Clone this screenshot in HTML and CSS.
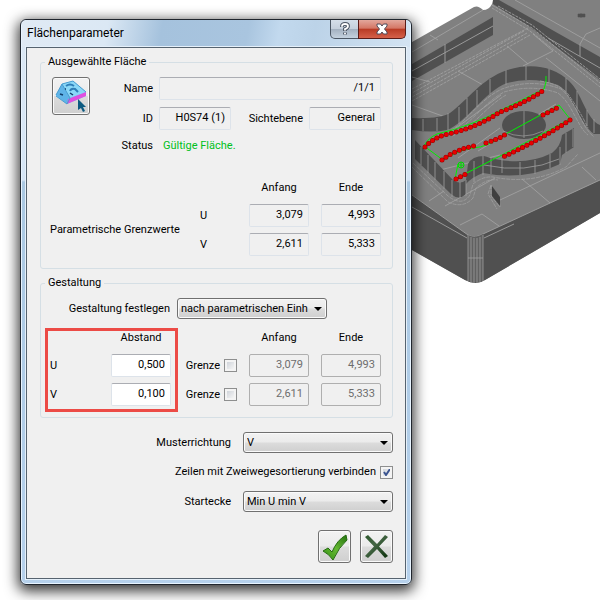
FILE: index.html
```
<!DOCTYPE html>
<html lang="de">
<head>
    <meta charset="UTF-8">
    <meta name="viewport" content="width=device-width, initial-scale=1.0">
    <title>Flächenparameter</title>
    <link rel="stylesheet" href="styles.css">
</head>
<body>
    <main class="workspace">
        <form class="dialog">
            <header class="titlebar">
                <h1>Flächenparameter</h1>
                <div class="window-buttons">
                    <button type="button" class="help" aria-label="Hilfe">
                        <svg width="12" height="14" viewBox="0 0 12 14"><path d="M3 5V4q0-2 3-2t3 2q0 2-3 3v2M6 10.500v2" fill="none" stroke="#4b5563" stroke-width="3.800"/><path d="M3 4.800V4q0-2 3-2t3 2q0 2-3 3v1.600M6 10.800v1.400" fill="none" stroke="#fff" stroke-width="1.800"/></svg>
                    </button>
                    <button type="button" class="close" aria-label="Schließen">
                        <svg width="12" height="12" viewBox="0 0 12 12"><path d="M1 1h3.500L6 3 7.500 1H11v2L8.500 6 11 9v2H7.500L6 9 4.500 11H1V9L3.500 6 1 3z" fill="#fff" stroke="#4f4a58"/></svg>
                    </button>
                </div>
            </header>

            <div class="content">
                <fieldset class="surface">
                    <legend>Ausgewählte Fläche</legend>
                    <div class="surface-info">
                        <button type="button" class="icon-button pick" aria-label="Fläche wählen">
                            <svg width="34" height="34" viewBox="0 0 34 34">
                                <path d="M2 16L8 5 19 2 32 13 32 17 13 25 2 17z" fill="#72c6f2"/>
                                <path d="M8 5L19 2 32 13 16 19z" fill="#8ad8f8"/>
                                <path d="M2 16L8 5 16 19 13 25z" fill="#5fb4e8"/>
                                <path d="M14 20L32 13V17L13 25z" fill="#e04fe0"/>
                                <path d="M2 16L8 5 19 2 32 13M8 5l8 14-3 6L2 17" fill="none" stroke="#4a9dd0"/>
                                <path d="M12 7q4-3 8 0M16 12q1-3 5-2l3 3" fill="none" stroke="#2f7fb8" stroke-width="2"/>
                                <path d="M16 14l3 2M6 15l3 1M11 10h1" stroke="#123e6b" stroke-width="1.500"/>
                                <path d="M24 20v11l3-2 2 4 2-1-2-4h3z" fill="#0c5a80"/>
                            </svg>
                        </button>
                        <div class="surface-grid">
                            <label for="name">Name</label>
                            <input class="wide" id="name" value="/1/1" readonly>
                            <label for="surfaceId">ID</label>
                            <input id="surfaceId" value="H0S74 (1)" readonly>
                            <label for="plane">Sichtebene</label>
                            <input id="plane" value="General" readonly>
                            <span class="caption">Status</span>
                            <output class="status">Gültige Fläche.</output>
                        </div>
                    </div>
                    <div class="range-grid">
                        <span class="head start">Anfang</span>
                        <span class="head">Ende</span>
                        <span class="range-title">Parametrische Grenzwerte</span>
                        <span>U</span>
                        <input aria-label="U Anfang" value="3,079" readonly>
                        <input aria-label="U Ende" value="4,993" readonly>
                        <span>V</span>
                        <input aria-label="V Anfang" value="2,611" readonly>
                        <input aria-label="V Ende" value="5,333" readonly>
                    </div>
                </fieldset>

                <fieldset class="design">
                    <legend>Gestaltung</legend>
                    <div class="design-mode">
                        <label for="mode">Gestaltung festlegen</label>
                        <select id="mode">
                            <option>nach parametrischen Einheiten</option>
                        </select>
                    </div>
                    <div class="design-values">
                        <div class="spacing">
                            <span class="head">Abstand</span>
                            <label for="stepU">U</label>
                            <input id="stepU" value="0,500">
                            <label for="stepV">V</label>
                            <input id="stepV" value="0,100">
                        </div>
                        <div class="limits">
                            <span class="head start">Anfang</span>
                            <span class="head">Ende</span>
                            <label>Grenze <input type="checkbox"></label>
                            <input aria-label="U Anfang" value="3,079" disabled>
                            <input aria-label="U Ende" value="4,993" disabled>
                            <label>Grenze <input type="checkbox"></label>
                            <input aria-label="V Anfang" value="2,611" disabled>
                            <input aria-label="V Ende" value="5,333" disabled>
                        </div>
                    </div>
                </fieldset>

                <div class="options">
                    <div class="option">
                        <label for="direction">Musterrichtung</label>
                        <select id="direction"><option>V</option></select>
                    </div>
                    <label class="connect">Zeilen mit Zweiwegesortierung verbinden <input type="checkbox" checked></label>
                    <div class="option">
                        <label for="corner">Startecke</label>
                        <select id="corner"><option>Min U min V</option></select>
                    </div>
                </div>

                <div class="actions">
                    <button type="submit" class="icon-button" aria-label="OK">
                        <svg width="31" height="31" viewBox="0 0 31 31"><defs><linearGradient id="ok" x1="0" y1="1" x2="1" y2="0"><stop offset="0" stop-color="#2f8f12"/><stop offset=".5" stop-color="#65b832"/><stop offset="1" stop-color="#24720e"/></linearGradient></defs><path d="M4 20l5-3 4 4Q18 9 27 4l1 5Q20 16 14 29 10 23 4 20z" fill="url(#ok)" stroke="#236b10"/></svg>
                    </button>
                    <button type="button" class="icon-button" aria-label="Abbrechen">
                        <svg width="31" height="31" viewBox="0 0 31 31"><defs><linearGradient id="cancel" x1="0" y1="0" x2="1" y2="1"><stop offset="0" stop-color="#2a562a"/><stop offset=".4" stop-color="#456745"/><stop offset="1" stop-color="#0b300b"/></linearGradient></defs><path d="M4 6l3-2 9 9 8-9 3 2-9 9.500L27 25l-3 2-8-9-9 9-3-2 9-9.500z" fill="url(#cancel)"/></svg>
                    </button>
                </div>
            </div>
        </form>

        <svg class="scene" viewBox="412 0 188 300" aria-hidden="true">
            <!-- top face and side walls of the part -->
            <path d="M412 42L474 7q4-2 9 3 6 0 9-6l1-4H600V213L485 280q-9 6-20 0L412 250z" fill="#808080"/>
            <path d="M412 195L468 235q7 4 15-1L600 180V213L485 280q-9 6-20 0L412 250z" fill="#505050"/>
            <path d="M412 64L493 17V35L412 81zM493 0h6L600 57V80L527 25 493 4z" fill="#505050"/>

            <!-- edge lines -->
            <g fill="none" stroke="#a0a0a0" stroke-width=".9">
                <path d="M412 71L493 26M445 44V63M412 52L483 10M430 35l8 5M412 77l18 5M515 0L600 48M600 28l-14 6-6 10v12M548 38l52 30"/>
                <path d="M492 5L532 28 600 83M492 8L530 31 600 87M498 6L532 25 600 79M527 33L412 97M524 31L412 93M528 28L412 89M530 35L412 101" stroke-dasharray="3 1"/>
                <path d="M507 46L528 64M533 34l20 17-30 15M412 105l36 13M458 71l25 14M600 101L546 58"/>
                <path d="M452 131l49-36M478 151l78-47M458 158L500 128M440 170l60-15"/>
                <path d="M412 195L468 235q7 4 15-1L600 180M412 207l55 31M484 238l30-14M429 201l15-10M460 225l22-11 17 12M522 179l28 24M582 167l14 13M600 153L500 200M445 206l50-28"/>
            </g>

            <!-- wall of the upper pocket -->
            <path d="M412 118q28 1 38-5C470 98 480 80 507 70q38-11 62 11c13 12 17 38 31 44v9h-6c-14-10-22-41-36-49q-26-9-51-2C485 91 466 123 447 130q-15 3-35 0z" fill="#505050"/>
            <path d="M423 119v12M437 118v13M448 113v17M459 107v17M467 98v18M477 90v17M490 79v15M506 70v15M526 66v14M549 69v14M566 78v16M577 91v21M587 110v16M594 119v14" stroke="#a0a0a0" stroke-width=".8"/>
            <path d="M446 133C466 124 478 100 502 89q30-11 59 0c14 10 20 38 33 48M449 135C470 126 482 104 504 92q28-8 54 1c14 10 20 35 30 42M452 136C473 128 484 108 506 95M540 81q20 3 28 13 12 17 20 34" fill="none" stroke="#a0a0a0" stroke-width=".8" stroke-dasharray="4 1"/>

            <!-- bore and wall of the island -->
            <ellipse cx="524" cy="125" rx="22" ry="14" fill="#505050"/>
            <path d="M524 111v27M503 131q20 10 40 0" fill="none" stroke="#a0a0a0" stroke-width=".7"/>
            <path d="M415 140L453 180q7 5 13 0l2-16q4-8 16-8 38 12 68-3 9-7 10-18l12-7v19l-12 8-2 9q-35 17-77 9-11 4-17 11v10q-7 7-15 0L415 159z" fill="#505050"/>
            <path d="M421 147v18M428 155v18M435 162v18M444 171v18M452 180v17M460 182v16M466 180v16M474 161v21M483 156v19M491 157v17M502 159v14M520 162v13M535 160v14M550 154v14M560 147v18M566 133v20M573 129v18M484 165q42 9 75-6" fill="none" stroke="#a0a0a0" stroke-width=".8"/>
            <path d="M413 163l35 33q14 11 22-1l3-11q10-8 20-7 40 8 73-10l12-13M412 167l36 35q15 7 25-4l3-10q11-10 22-8M491 185v11l9 11-1-9-8-13-3 9 9 15" fill="none" stroke="#a0a0a0" stroke-width=".8" stroke-dasharray="4 1"/>
            <path d="M492 186l8 11v9l-8-10z" fill="#404040"/>
            <path d="M468 235q7 4 15-1V280q-9 5-15 0z" fill="#606060"/>
            <path d="M468 235v46M471 237v46M474 238v45M477 238v45M480 237v45M483 235v46M468 258h15" stroke="#a0a0a0" stroke-width=".8"/>
            <path d="M578 14h7v3h-7zM581 13v5" fill="#505050" stroke="#505050" stroke-width=".6"/>

            <!-- tool path -->
            <path d="M546 76v6l-2 7q-20 10-41 20-31 17-66 25-9 4-13 12l19 14q15-10 30-12 15-1 29-12l57-31 11 14q-35 19-68 36l-47 24 3-15" fill="none" stroke="#00f000" stroke-width="1"/>
            <g class="point-shadows">
                <path d="M425 147q9-10 23-13Q478 127 500 112 525 103 544 90"/>
                <path d="M442 160q14-11 36-15M486 143q13-4 20-9M543 115l16-8M570 120q-32 21-67 37M456 179l10-5"/>
            </g>
            <g class="points">
                <path d="M425 147q9-10 23-13Q478 127 500 112 525 103 544 90"/>
                <path d="M442 160q14-11 36-15M486 143q13-4 20-9M543 115l16-8M570 120q-32 21-67 37M456 179l10-5"/>
            </g>
            <g fill="none" stroke="#00d800"><circle cx="461" cy="165" r="3"/><path d="M458 165h6M461 162v6"/></g>
        </svg>
    </main>
</body>
</html>
```
FILE: styles.css
```
* {
    box-sizing: border-box;
}

body {
    margin: 0;
    background: #fff;
    color: #000;
    font-family: Roboto, "Liberation Sans", sans-serif;
    font-size: 11px;
    line-height: 14px;
}

input, select, button {
    font: inherit;
    color: inherit;
    margin: 0;
}

.workspace {
    display: flex;
    align-items: flex-start;
    padding-bottom: 15px;
}

.scene {
    flex: none;
    width: 188px;
}

.points,
.point-shadows {
    fill: none;
    stroke: #e80000;
    stroke-width: 4;
    stroke-linecap: round;
    stroke-dasharray: 0 5;
}

.point-shadows {
    stroke: #980000;
    stroke-width: 5;
}

/* window frame */
.dialog {
    position: relative;
    z-index: 1;
    flex: 1;
    min-width: 0;
    margin: 19px 0 0 20px;
    padding: 0 5px 5px;
    border: 1px solid #20262e;
    border-radius: 6px;
    background: linear-gradient(#dce8f4, #d5e5f5 160px, #aac8e2 162px, #b6d1ec);
    box-shadow: inset 0 0 0 1px #e8f4ff, 0 4px 14px 2px rgba(0, 0, 0, 0.8);
}

.titlebar {
    display: flex;
    justify-content: space-between;
    align-items: flex-start;
    height: 27px;
    margin: 0 -4px;
    padding: 0 4px;
    border-radius: 5px 5px 0 0;
    background: linear-gradient(100deg, #e0eaf4, #dbe8f4 22%, #a5c2dd 36%, #a9c5df 58%, #c2d9ee 66%, #bcd3e8 75%, #d3e3f2);
}

.titlebar h1 {
    margin: 6px 1px;
    font-size: 12px;
    font-weight: normal;
}

.window-buttons {
    display: flex;
}

.window-buttons button {
    display: grid;
    place-items: center;
    height: 19px;
    padding: 0;
    border: 1px solid #4b5764;
    border-top: 0;
}

.window-buttons .help {
    width: 29px;
    border-radius: 0 0 0 5px;
    background: linear-gradient(#d5dfe9, #c5d0dc 48%, #a2b0bf 50%, #c4d2df);
}

.window-buttons .close {
    width: 48px;
    margin-left: -1px;
    border-color: #5a1c18;
    border-radius: 0 0 5px 0;
    background: linear-gradient(#e3a79c, #d47665 46%, #b83a24 50%, #d5614a);
}

.content {
    padding: 7px 12px 15px 13px;
    border: 1px solid #56636f;
    background: #f0f0f0;
    box-shadow: 0 0 0 1px #e5f0fa;
}

/* groups */
fieldset {
    min-width: 0;
    margin: 0;
    border: 1px solid #d5dfe5;
    border-radius: 3px;
}

legend {
    padding: 0 3px;
}

.surface {
    padding: 8px 11px 12px 4px;
}

.surface-info {
    display: flex;
    align-items: flex-start;
    padding-left: 7px;
}

.surface-grid {
    flex: 1;
    display: grid;
    grid-template-columns: 63px 72px 1fr 72px;
    gap: 7px 6px;
    align-items: center;
}

.surface-grid label,
.surface-grid .caption {
    text-align: right;
}

.surface-grid .wide {
    grid-column: 2 / -1;
}

.surface-grid .status {
    grid-column: 2 / -1;
    padding: 2px 4px;
    color: #00c020;
}

input:not([type="checkbox"]) {
    width: 100%;
    min-width: 0;
    height: 23px;
    padding: 0 5px 2px;
    border: 1px solid #dde3ea;
    border-top-color: #abadb3;
    border-radius: 2px;
    background: #fff;
    text-align: right;
}

input:read-only:not([type="checkbox"]) {
    background: #f0f0f0;
}

input:disabled:not([type="checkbox"]) {
    border-color: #afafaf;
    background: #f0f0f0;
    color: #6d6d6d;
}

.range-grid {
    display: grid;
    grid-template-columns: minmax(0, 1fr) 37px 60px 60px;
    gap: 6px 12px;
    align-items: center;
    padding: 26px 0 0 5px;
}

.range-title {
    grid-row: 2 / 4;
    white-space: nowrap;
}

.head {
    padding-bottom: 3px;
    text-align: center;
}

.range-grid .start {
    grid-column: 3;
}

/* layout settings */
.design {
    margin-top: 7px;
    padding: 8px 11px 5px 4px;
}

.design-mode {
    display: flex;
    align-items: center;
    gap: 7px;
}

.design-mode label {
    width: 125px;
    text-align: right;
}

select {
    width: 150px;
    height: 21px;
    padding: 0 18px 0 3px;
    border: 1px solid #707070;
    border-radius: 3px;
    appearance: none;
    background: url("data:image/svg+xml,%3Csvg xmlns='http://www.w3.org/2000/svg' width='8' height='4'%3E%3Cpath d='M0 0h8L4 4z'/%3E%3C/svg%3E") no-repeat right 4px center, linear-gradient(#f2f2f2, #ebebeb 49%, #dcdcdc 51%, #cfcfcf);
    box-shadow: inset 0 0 0 1px #fafafa;
}

.design-values {
    display: flex;
    justify-content: space-between;
    margin-top: 9px;
}

.spacing {
    display: grid;
    grid-template-columns: 49px 60px;
    gap: 6px 12px;
    align-items: center;
    padding: 0 4px 3px 2px;
    border: 3px solid #ec4b46;
}

.spacing .head {
    grid-column: 2;
}

.limits {
    display: grid;
    grid-template-columns: auto 60px 60px;
    gap: 6px 12px;
    align-items: center;
    padding: 3px 0 6px;
}

.limits .start {
    grid-column: 2;
}

.limits label,
.connect {
    display: flex;
    align-items: center;
    gap: 4px;
}

input[type="checkbox"] {
    width: 13px;
    height: 13px;
    border: 1px solid #8e8f8f;
    appearance: none;
    background: linear-gradient(135deg, #c5cbd3, #f4f4f4 80%);
    box-shadow: inset 0 0 0 2px #f4f4f4;
}

input[type="checkbox"]:checked {
    background: url("data:image/svg+xml,%3Csvg xmlns='http://www.w3.org/2000/svg' width='11' height='11'%3E%3Cpath d='M3 5l2 3 4-6' fill='none' stroke='%233b5490' stroke-width='2'/%3E%3C/svg%3E") no-repeat center, linear-gradient(135deg, #c5cbd3, #f4f4f4 80%);
}

.options {
    display: flex;
    flex-direction: column;
    align-items: flex-end;
    gap: 12px;
    padding-top: 14px;
}

.option {
    display: flex;
    align-items: center;
    gap: 12px;
}

.actions {
    display: flex;
    justify-content: flex-end;
    gap: 9px;
    padding-top: 18px;
}

.icon-button {
    display: grid;
    place-items: center;
    width: 33px;
    height: 33px;
    padding: 0;
    border: 1px solid #707070;
    border-radius: 3px;
    background: linear-gradient(#f2f2f2, #ebebeb 49%, #dcdcdc 51%, #cfcfcf);
    box-shadow: inset 0 0 0 1px #fafafa;
}

.pick {
    width: 38px;
    height: 38px;
}
```
